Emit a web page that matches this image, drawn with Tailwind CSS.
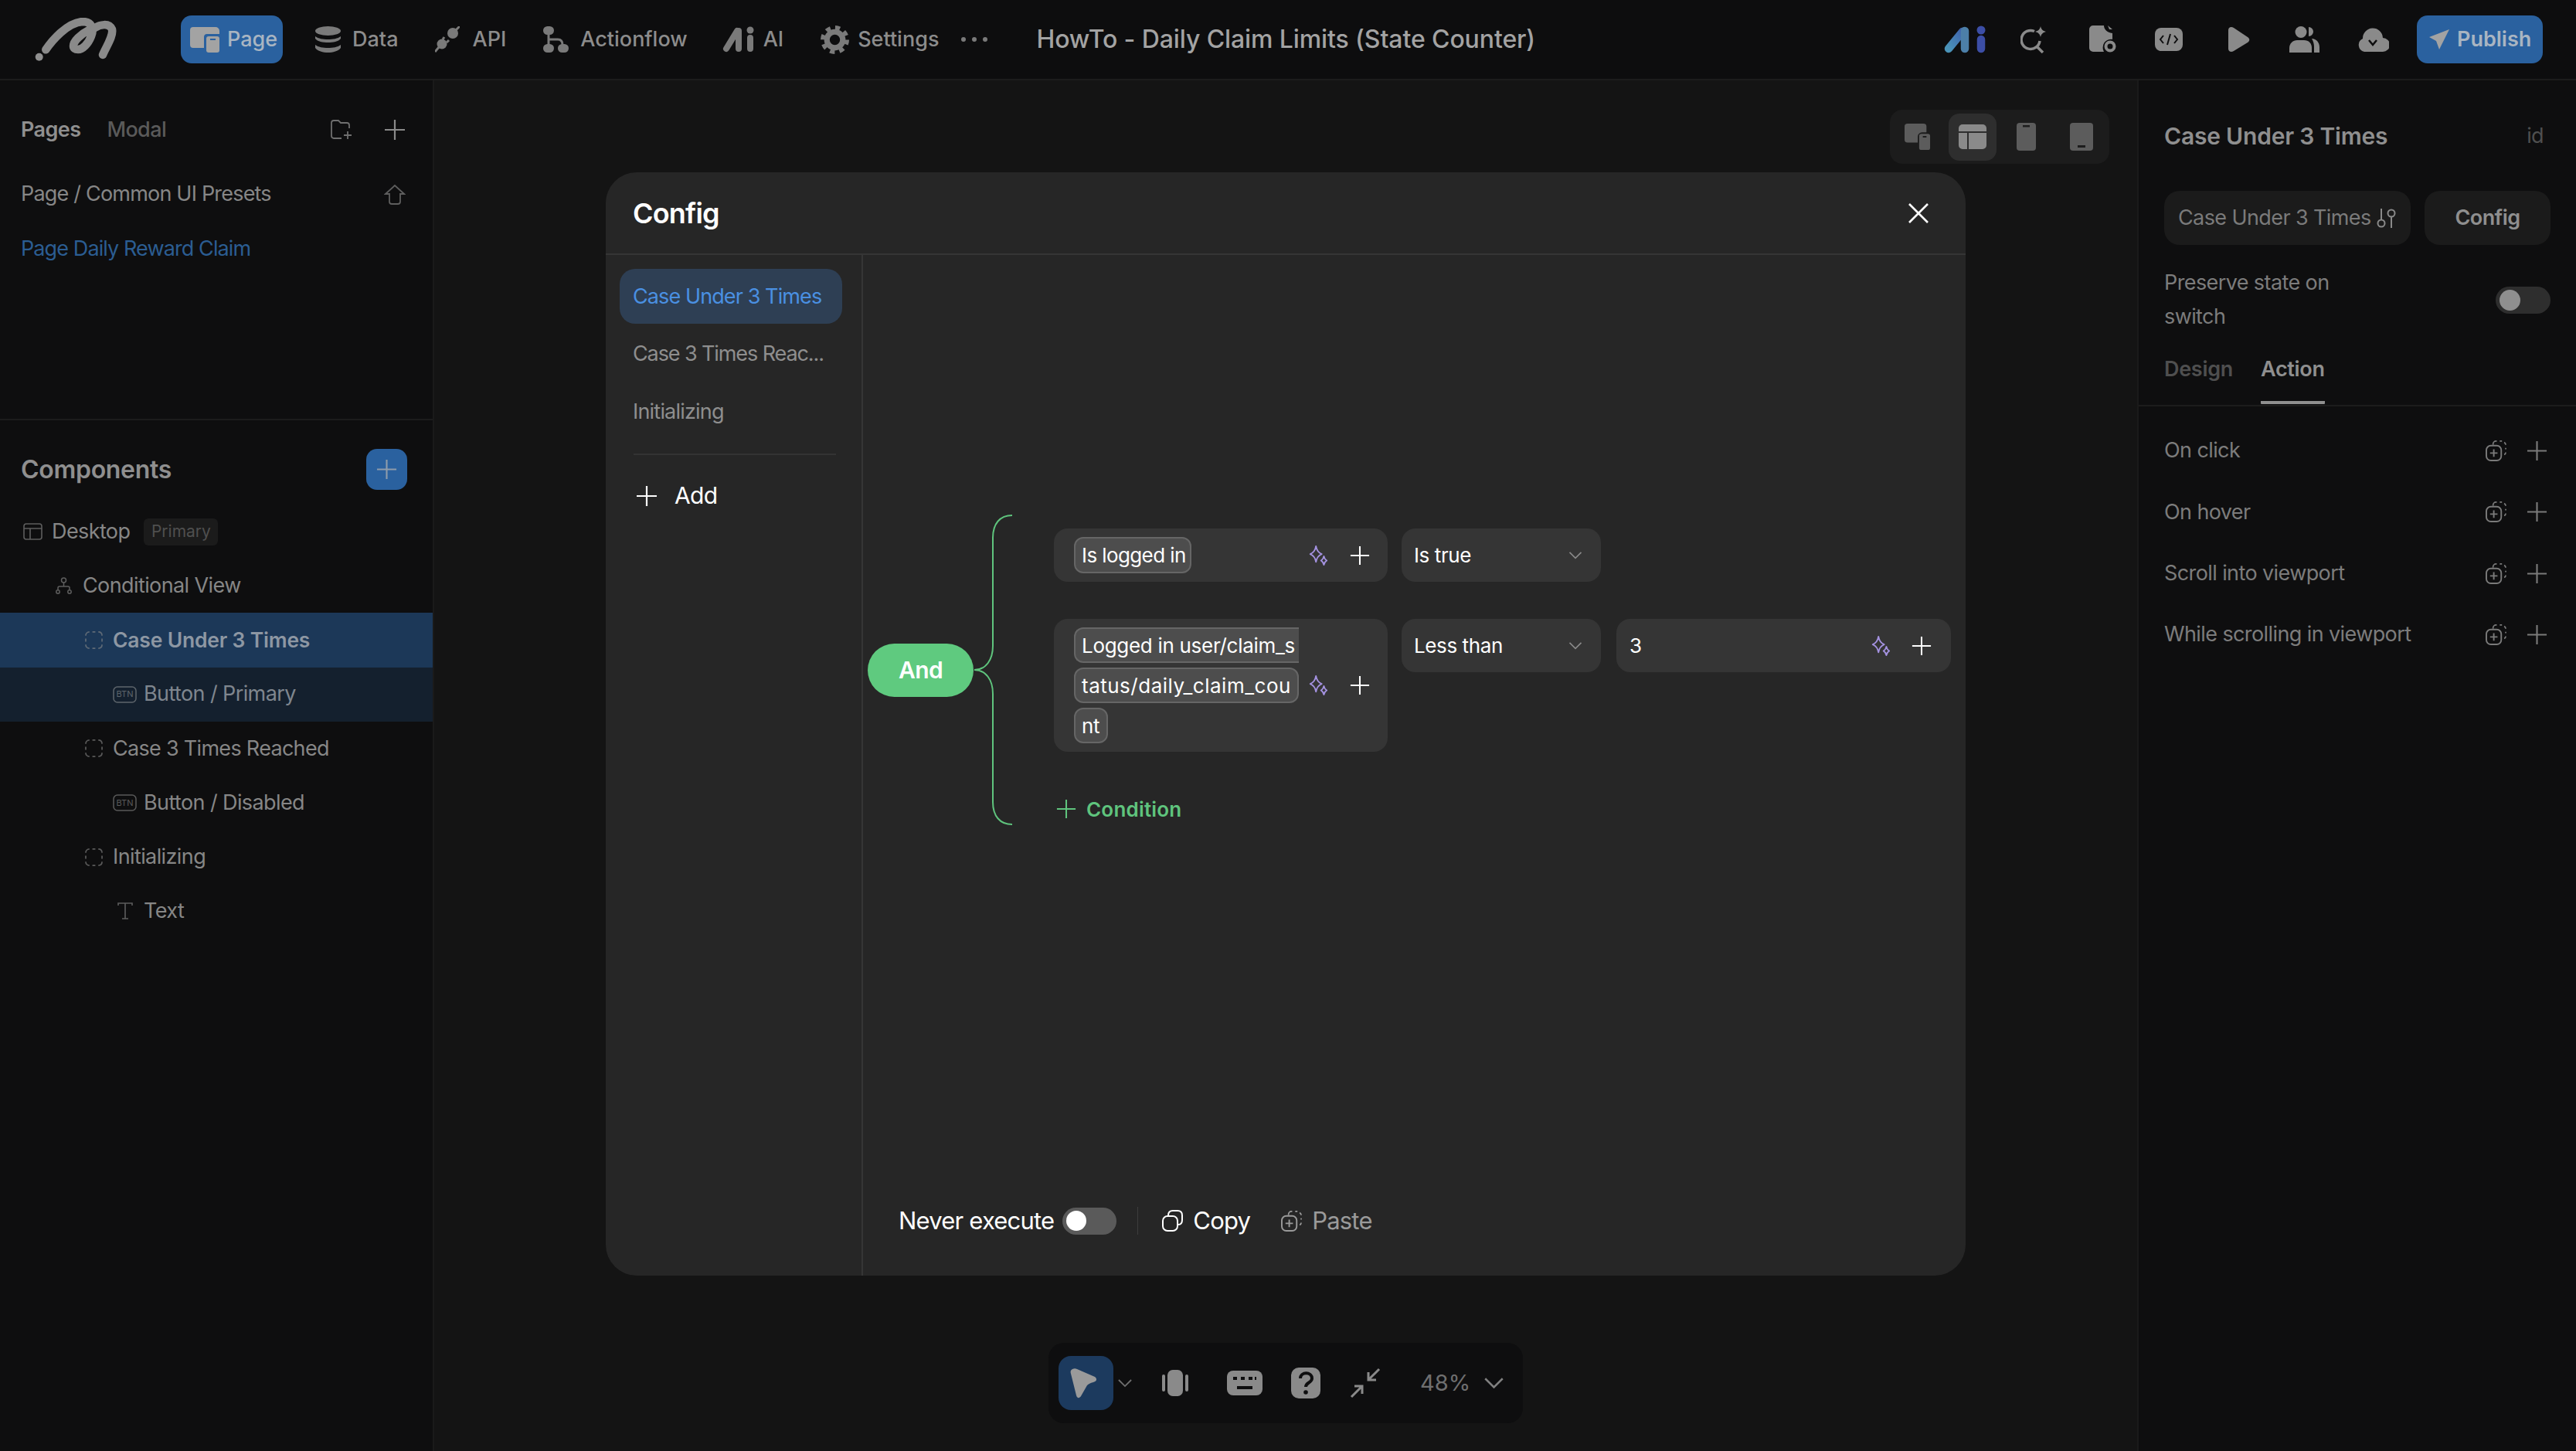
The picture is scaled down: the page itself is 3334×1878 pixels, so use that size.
<!doctype html>
<html lang="en">
  <head>
    <meta charset="UTF-8" />
    <title>HowTo - Daily Claim Limits (State Counter)</title>
    <script src="https://cdn.jsdelivr.net/npm/@tailwindcss/browser@4"></script>
  </head>
  <body class="h-[1878px] w-[3334px] overflow-hidden bg-[#141414] font-[Inter,sans-serif] text-[27px] tracking-[-0.6px] text-[#8c8c8c]">
    <!-- shared icons -->
    <svg class="hidden">
      <symbol id="plus" viewBox="0 0 28 28"><path d="M14 1v26M1 14h26" fill="none" stroke="currentColor" stroke-width="2.2" /></symbol>
      <symbol id="chev" viewBox="0 0 20 12"><path d="M1 1l9 9 9-9" fill="none" stroke="currentColor" stroke-width="2" /></symbol>
      <symbol id="spark" viewBox="0 0 30 28"><path d="M12 1c1 6 3 9 8 11-5 2-7 5-8 11-1-6-3-9-8-11 5-2 7-5 8-11zM23 15c.5 3 1.500 4.500 4 6-2.500 1.500-3.500 3-4 6-.5-3-1.500-4.500-4-6 2.500-1.500 3.500-3 4-6z" fill="none" stroke="currentColor" stroke-width="2" stroke-linejoin="round" /></symbol>
      <symbol id="paste" viewBox="0 0 28 28"><path d="M10 6V5a4 4 0 0 1 4-4h1M19 1h3M25 2.500c1.500 1 2 2 2 3.500M27 10v2M27 16c0 1.500-.5 2.500-2 3" fill="none" stroke="currentColor" stroke-width="1.800" /><rect x="1" y="7" width="20" height="20" rx="6" fill="none" stroke="currentColor" stroke-width="2" /><path d="M11 12v10M6 17h10" stroke="currentColor" stroke-width="2" /></symbol>
      <symbol id="dash" viewBox="0 0 24 24"><path d="M1 6c0-3 2-5 5-5M10 1h4M18 1c3 0 5 2 5 5M23 10v4M23 18c0 3-2 5-5 5M14 23h-4M6 23c-3 0-5-2-5-5M1 14v-4" fill="none" stroke="currentColor" stroke-width="1.800" /></symbol>
      <symbol id="btn" viewBox="0 0 31 22"><rect x="1" y="1" width="29" height="20" rx="5" fill="none" stroke="currentColor" stroke-width="1.500" /></symbol>
    </svg>

    <!-- top bar -->
    <header class="flex h-[104px] items-center border-b-2 border-[#1c1c1c] bg-[#0d0d0e] pr-[43px] pl-[45px]">
      <svg class="h-[56px] w-[106px]" viewBox="0 0 106 56" fill="none" stroke="#8a8a8a" stroke-linecap="round">
        <circle cx="5.700" cy="50.700" r="5" fill="#8f8f8f" stroke="none" />
        <path d="M14.300 41.300C22 30 42 6 62 5c12 0 15 9 11 19-4 10-11 17-17 17-8 0-8-7 0-15 6-6 10-8 14-10" stroke-width="10.500" />
        <path d="M78 13c6-4 18-7 22 2 2 9-8 23-12 33" stroke-width="10.500" />
      </svg>
      <nav class="ml-[83px] flex items-center gap-[48px] font-medium tracking-[0px]">
        <a class="mr-[-6px] flex h-[62px] w-[132px] items-center gap-[10px] rounded-[14px] bg-[#2a619f] pl-[12px] text-[#a9b5c2]">
          <svg class="h-[33px] w-[38px] shrink-0" viewBox="0 0 38 33"><path d="M4 0h29a5 5 0 0 1 5 5v4H22a4 4 0 0 0-4 4v14H4a4 4 0 0 1-4-4V4a4 4 0 0 1 4-4z" fill="#a3a3a3" /><rect x="21" y="12" width="17" height="21" rx="3" fill="#a3a3a3" /><rect x="26" y="15" width="7" height="2" fill="#2a619f" /></svg>
          <span>Page</span>
        </a>
        <a class="flex items-center gap-[15px]">
          <svg class="h-[34px] w-[33px]" viewBox="0 0 33 34" fill="#7a7a7a"><ellipse cx="16.500" cy="6" rx="16.500" ry="6" /><path d="M0 13c4 3 10 4 16.500 4S29 16 33 13v3c-3 4-10 5-16.500 5S3 20 0 16zM0 24c4 3 10 4 16.500 4S29 27 33 24v4c-3 4-10 6-16.500 6S3 32 0 28z" /></svg>
          <span>Data</span>
        </a>
        <a class="flex items-center gap-[16px]">
          <svg class="h-[34px] w-[32px]" viewBox="0 0 32 34" fill="#7a7a7a"><circle cx="23" cy="9" r="7" /><circle cx="9" cy="23" r="6.500" /><path d="M26 6l6-6M5 27l-5 6M12 14l-2 3M18 18l-3 3" fill="none" stroke="#7a7a7a" stroke-width="3" /></svg>
          <span>API</span>
        </a>
        <a class="flex items-center gap-[15px]">
          <svg class="h-[34px] w-[33px]" viewBox="0 0 33 34" fill="#7a7a7a"><rect width="14" height="11" rx="5.500" /><rect y="23" width="14" height="11" rx="5.500" /><rect x="19" y="23" width="14" height="11" rx="5.500" /><path d="M7 10v14M7 17h12c4 0 6 2 6 7" fill="none" stroke="#7a7a7a" stroke-width="3" /></svg>
          <span>Actionflow</span>
        </a>
        <a class="ml-[-3px] flex items-center gap-[11px]">
          <svg class="h-[34px] w-[42px]" viewBox="0 0 42 34" stroke="#7a7a7a" stroke-linecap="round" fill="none"><path d="M5 29L19 6M21 6v23M36 15v14" stroke-width="8" /><circle cx="36" cy="5" r="4.500" fill="#7a7a7a" stroke="none" /></svg>
          <span>AI</span>
        </a>
        <a class="flex items-center gap-[11px]">
          <svg class="h-[37px] w-[37px]" viewBox="0 0 36 36" fill="none" stroke="#7a7a7a"><circle cx="18" cy="18" r="10" stroke-width="7" /><circle cx="18" cy="18" r="15" stroke-width="6" stroke-dasharray="5.900 5.880" /></svg>
          <span>Settings</span>
        </a>
        <svg class="ml-[-19px] h-[6px] w-[34px]" viewBox="0 0 34 6" fill="#7a7a7a"><circle cx="3" cy="3" r="3" /><circle cx="17" cy="3" r="3" /><circle cx="31" cy="3" r="3" /></svg>
      </nav>
      <h1 class="ml-[63px] text-[32px] font-medium tracking-[-0.1px] text-[#a3a3a3]">HowTo - Daily Claim Limits (State Counter)</h1>
      <div class="ml-auto flex items-center">
        <svg class="h-[36px] w-[54px]" viewBox="0 0 54 36" fill="none" stroke-linecap="round">
          <defs><linearGradient id="aiblue" x1="0" y1="1" x2="1" y2="0"><stop offset="0" stop-color="#4a93b8" /><stop offset="1" stop-color="#3f63ad" /></linearGradient></defs>
          <path d="M6 30L24 8" stroke="url(#aiblue)" stroke-width="10.500" /><path d="M27 7v23" stroke="#4c7fa8" stroke-width="10.500" />
          <circle cx="48" cy="6" r="5.500" fill="#3c4ea6" /><path d="M48 18v12" stroke="#3c4ea6" stroke-width="10.500" />
        </svg>
        <svg class="ml-[45px] h-[36px] w-[33px]" viewBox="0 0 33 36" fill="none" stroke="#8a8a8a" stroke-width="3.500"><path d="M18 7.500A12 12 0 1 0 25 20M21 27l8 8" /><path d="M26 1c1 4 3 6 7 7-4 1-6 3-7 7-1-4-3-6-7-7 4-1 6-3 7-7z" fill="#8a8a8a" stroke="none" /></svg>
        <svg class="ml-[56px] h-[38px] w-[35px]" viewBox="0 0 35 38" fill="#8a8a8a"><path d="M5 1h14c0 5 4 9 11 10v8c-6-1-11 3-12 8-1 3 0 6 1 8H5a5 5 0 0 1-5-5V6a5 5 0 0 1 5-5z" /><path d="M24 1l6 5h-4z" /><circle cx="27" cy="28" r="5.500" fill="none" stroke="#8a8a8a" stroke-width="4" /></svg>
        <svg class="ml-[50px] h-[30px] w-[36px]" viewBox="0 0 36 30"><rect width="36" height="30" rx="8" fill="#8a8a8a" /><path d="M11 10l-4 5 4 5M25 10l4 5-4 5M20 8l-4 14" fill="none" stroke="#0d0d0e" stroke-width="2" /></svg>
        <svg class="ml-[59px] h-[32px] w-[28px]" viewBox="0 0 28 32"><path d="M0 4c0-4 4-5 7-3l18 12c3 2 3 5 0 7L7 31c-3 2-7 1-7-3z" fill="#8a8a8a" /></svg>
        <svg class="ml-[51px] h-[34px] w-[39px]" viewBox="0 0 39 34" fill="#8a8a8a"><circle cx="15" cy="7.500" r="7.500" /><path d="M0 34v-6c0-6 5-10 10-10h9c6 0 10 4 10 10v6z" /><path d="M25 1a6 6 0 0 1 0 12zM29 16c6 0 10 5 10 11v7h-7v-7c0-4-1-8-3-11z" /></svg>
        <svg class="ml-[49px] h-[32px] w-[41px]" viewBox="0 0 41 32"><path d="M9 32a9 9 0 0 1-2-17 13 13 0 0 1 26-1 9 9 0 0 1 0 18z" fill="#8a8a8a" /><path d="M15 17l5 6 5-6" fill="none" stroke="#0d0d0e" stroke-width="2.500" /></svg>
        <a class="ml-[36px] flex h-[62px] w-[163px] items-center gap-[10px] rounded-[14px] bg-[#2a619f] pl-[16px] font-semibold tracking-[0px] text-[#a9b5c2]">
          <svg class="h-[26px] w-[26px] shrink-0" viewBox="0 0 26 26"><path d="M26 0L0 10l9 5 4 11z" fill="#a3a3a3" /></svg>
          <span>Publish</span>
        </a>
      </div>
    </header>

    <div class="flex h-[1774px]">
      <!-- left panel -->
      <aside class="flex w-[562px] shrink-0 flex-col border-r-2 border-[#1a1a1a] bg-[#0e0e0f]">
        <section class="h-[440px] border-b-2 border-[#1c1c1c]">
          <div class="mt-[36px] flex h-[56px] items-center pr-[35px] pl-[27px]">
            <span class="font-semibold text-[#8f8f8f]">Pages</span>
            <span class="ml-[34px] font-medium text-[#5a5a5a]">Modal</span>
            <svg class="mr-[41px] ml-auto h-[26px] w-[28px]" viewBox="0 0 28 26" fill="none" stroke="#6f6f6f" stroke-width="1.800"><path d="M14 24H4a3 3 0 0 1-3-3V4a3 3 0 0 1 3-3h6l3 3h8a3 3 0 0 1 3 3v4" /><path d="M22 15v10M17 20h10" /></svg>
            <svg class="h-[28px] w-[28px] text-[#8a8a8a]"><use href="#plus" /></svg>
          </div>
          <div class="mt-[20px] flex h-[71px] items-center justify-between pr-[35px] pl-[27px] tracking-[-0.8px] text-[#868686]">
            <span>Page / Common UI Presets</span>
            <svg class="h-[26px] w-[28px]" viewBox="0 0 28 26" fill="none" stroke="#5e5e5e" stroke-width="1.800"><path d="M14 1L2 12h5v10a3 3 0 0 0 3 3h8a3 3 0 0 0 3-3V12h5z" /></svg>
          </div>
          <div class="flex h-[71px] items-center pl-[27px] tracking-[-0.9px] text-[#2b5d92]">Page Daily Reward Claim</div>
        </section>
        <section>
          <div class="mt-[37px] flex h-[53px] items-center justify-between pr-[33px] pl-[27px]">
            <h2 class="text-[32px] font-semibold tracking-[-0.3px] text-[#8f8f8f]">Components</h2>
            <button class="flex h-[53px] w-[53px] items-center justify-center rounded-[14px] bg-[#2a619f] text-[#8e9cab]"><svg class="h-[27px] w-[27px]"><use href="#plus" /></svg></button>
          </div>
          <ul class="mt-[19px]">
            <li class="flex h-[70.2px] items-center pl-[30px]">
              <svg class="mr-[12px] h-[22px] w-[25px]" viewBox="0 0 25 22" fill="none" stroke="#5e5e5e" stroke-width="1.600"><rect x="1" y="1" width="23" height="20" rx="3" /><path d="M1 7h23M9 7v14" /></svg>
              <span class="text-[#868686]">Desktop</span>
              <span class="ml-[18px] flex h-[35px] w-[96px] items-center justify-center rounded-[6px] bg-[#1b1b1b] text-[21px] tracking-[0px] text-[#4f4f4f]">Primary</span>
            </li>
            <li class="flex h-[70.2px] items-center pl-[72px] text-[#868686]">
              <svg class="mr-[14px] h-[22px] w-[21px]" viewBox="0 0 21 22" fill="none" stroke="#5e5e5e" stroke-width="1.500"><circle cx="10.500" cy="4" r="3" /><circle cx="3" cy="19" r="2.200" /><circle cx="18" cy="19" r="2.200" /><path d="M10.500 7v5M3 17v-3a2 2 0 0 1 2-2h11a2 2 0 0 1 2 2v3" /></svg>
              <span>Conditional View</span>
            </li>
            <li class="flex h-[70.2px] items-center bg-[#1c3858] pl-[110px] font-semibold text-[#8d97a3]">
              <svg class="mr-[13px] h-[23px] w-[23px] text-[#5f6a76]"><use href="#dash" /></svg>
              <span class="text-[26.500px] tracking-[-0.2px]">Case Under 3 Times</span>
            </li>
            <li class="flex h-[70.2px] items-center bg-[#14202e] pl-[146px] text-[#7f868e]">
              <span class="relative mr-[9px] flex h-[22px] w-[31px] items-center justify-center text-[#5e656c]"><svg class="absolute inset-0 h-[22px] w-[31px]"><use href="#btn" /></svg><span class="text-[11px] tracking-[0px]">BTN</span></span>
              <span>Button / Primary</span>
            </li>
            <li class="flex h-[70.2px] items-center pl-[110px] tracking-[-0.7px] text-[#868686]">
              <svg class="mr-[13px] h-[23px] w-[23px] text-[#5a5a5a]"><use href="#dash" /></svg>
              <span>Case 3 Times Reached</span>
            </li>
            <li class="flex h-[70.2px] items-center pl-[146px] text-[#868686]">
              <span class="relative mr-[9px] flex h-[22px] w-[31px] items-center justify-center text-[#5a5a5a]"><svg class="absolute inset-0 h-[22px] w-[31px]"><use href="#btn" /></svg><span class="text-[11px] tracking-[0px]">BTN</span></span>
              <span>Button / Disabled</span>
            </li>
            <li class="flex h-[70.2px] items-center pl-[110px] text-[#868686]">
              <svg class="mr-[13px] h-[23px] w-[23px] text-[#5a5a5a]"><use href="#dash" /></svg>
              <span>Initializing</span>
            </li>
            <li class="flex h-[70.2px] items-center pl-[152px] text-[#868686]">
              <svg class="mr-[14px] h-[22px] w-[20px]" viewBox="0 0 20 22" fill="none" stroke="#5e5e5e" stroke-width="1.600"><path d="M1 4V1h18v3M10 1v20M6 21h8" /></svg>
              <span>Text</span>
            </li>
          </ul>
        </section>
      </aside>

      <!-- canvas -->
      <main class="relative flex-1">
        <div class="absolute top-[38px] right-[36px] flex h-[70px] w-[284px] items-center rounded-[16px] bg-[#1c1c1c] pl-[19px]">
          <svg class="h-[36px] w-[34px]" viewBox="0 0 36 36" fill="#5c5c5c"><path d="M4 0h22a4 4 0 0 1 4 4v8h-6a6 6 0 0 0-6 6v8H4a4 4 0 0 1-4-4V4a4 4 0 0 1 4-4z" /><rect x="20" y="14" width="15" height="22" rx="3" /><rect x="25" y="17" width="5" height="2" fill="#1c1c1c" /></svg>
          <div class="ml-[23px] flex h-[61px] w-[62px] items-center justify-center rounded-[14px] bg-[#2e2e2e]">
            <svg class="h-[32px] w-[36px]" viewBox="0 0 36 32" fill="#8a8a8a"><path d="M5 0h26a5 5 0 0 1 5 5v4H0V5a5 5 0 0 1 5-5z" /><path d="M0 11h11v21H5a5 5 0 0 1-5-5zM13 11h23v16a5 5 0 0 1-5 5H13z" /></svg>
          </div>
          <svg class="ml-[26px] h-[36px] w-[25px]" viewBox="0 0 25 36" fill="#5c5c5c"><path d="M4 0h17a4 4 0 0 1 4 4v28a4 4 0 0 1-4 4H4a4 4 0 0 1-4-4V4a4 4 0 0 1 4-4z" /><rect x="8" y="3" width="9" height="2.500" fill="#1c1c1c" /></svg>
          <svg class="ml-[44px] h-[36px] w-[30px]" viewBox="0 0 30 36" fill="#5c5c5c"><path d="M4 0h22a4 4 0 0 1 4 4v28a4 4 0 0 1-4 4H4a4 4 0 0 1-4-4V4a4 4 0 0 1 4-4z" /><rect x="10" y="29" width="10" height="3" fill="#1c1c1c" /></svg>
        </div>

        <div class="absolute bottom-[36px] left-1/2 flex h-[104px] w-[614px] -translate-x-1/2 items-center rounded-[20px] bg-[#0e0e0f] pl-[13px] text-[#8a8a8a]">
          <div class="flex h-[70px] w-[71px] items-center justify-center rounded-[16px] bg-[#1c3a5e]">
            <svg class="h-[40px] w-[42px]" viewBox="0 0 42 40"><path d="M3 2c-2 1-3 3-2 6l7 28c1 4 4 4 6 1l8-14c2-2 4-3 8-4 5-1 5-5 2-7L9 2C7 1 5 1 3 2z" fill="#9a9a9a" /></svg>
          </div>
          <svg class="ml-[6px] h-[11px] w-[18px] text-[#6f6f6f]"><use href="#chev" /></svg>
          <svg class="ml-[38px] h-[34px] w-[36px]" viewBox="0 0 36 34"><rect x="8" width="20" height="34" rx="7" fill="#8a8a8a" /><path d="M3 8v18M33 8v18" stroke="#8a8a8a" stroke-width="4" stroke-linecap="round" /></svg>
          <svg class="ml-[49px] h-[32px] w-[46px]" viewBox="0 0 46 32"><rect width="46" height="32" rx="8" fill="#8a8a8a" /><path d="M8 10h5M18 10h5M28 10h5M36 10h2M13 22h20" stroke="#0e0e0f" stroke-width="4" /></svg>
          <svg class="ml-[37px] h-[40px] w-[38px]" viewBox="0 0 38 40"><rect width="38" height="40" rx="10" fill="#8a8a8a" /><path d="M12 14c0-9 15-9 15 0 0 6-8 5-8 11" fill="none" stroke="#0e0e0f" stroke-width="4" /><circle cx="19" cy="32" r="2.800" fill="#0e0e0f" /></svg>
          <svg class="ml-[38px] h-[40px] w-[40px]" viewBox="0 0 40 40" fill="none" stroke="#8a8a8a" stroke-width="3"><path d="M38 2L24 16M24 6v10h10M2 38l14-14M6 24h10v10" /></svg>
          <span class="ml-[51px] text-[29px] tracking-[0px] text-[#6f6f6f]">48%</span>
          <svg class="ml-[18px] h-[15px] w-[25px] text-[#808080]"><use href="#chev" /></svg>
        </div>

        <!-- config modal -->
        <div class="absolute top-[119px] left-[222px] flex h-[1428px] w-[1760px] flex-col rounded-[40px] bg-[#262626] text-white">
          <div class="flex h-[107px] shrink-0 items-center justify-between border-b-2 border-[#353535] pr-[47px] pl-[35px]">
            <h2 class="text-[36px] font-semibold tracking-[-0.8px]">Config</h2>
            <svg class="h-[28px] w-[28px]" viewBox="0 0 28 28"><path d="M2 2l24 24M26 2L2 26" stroke="#fff" stroke-width="2.600" /></svg>
          </div>
          <div class="flex flex-1">
            <div class="w-[333px] shrink-0 border-r-2 border-[#353535] pt-[18px] pl-[18px]">
              <div class="flex h-[71px] w-[288px] items-center rounded-[20px] bg-[#2e3f54] pt-[2px] pl-[17px] tracking-[-0.9px] text-[#4a90e2]">Case Under 3 Times</div>
              <div class="mt-[4px] flex h-[71px] w-[288px] items-center pl-[17px] tracking-[-1.1px] text-[#8e8e8e]">Case 3 Times Reac...</div>
              <div class="mt-[4px] flex h-[71px] w-[288px] items-center pl-[17px] tracking-[-0.8px] text-[#8e8e8e]">Initializing</div>
              <div class="mt-[18px] ml-[18px] h-[2px] w-[262px] bg-[#333333]"></div>
              <div class="mt-[17px] flex h-[71px] items-center pl-[21px] text-[30px]">
                <svg class="h-[28px] w-[28px]"><use href="#plus" /></svg>
                <span class="ml-[22px]">Add</span>
              </div>
            </div>
            <div class="flex flex-1 flex-col">
              <div class="relative mt-[336px] ml-[6px] flex h-[402px] items-center">
                <div class="flex h-[69px] w-[137px] items-center justify-center rounded-full bg-[#5fca7f] text-[30px] font-semibold">And</div>
                <svg class="absolute top-0 left-[137px] h-[402px] w-[52px]" viewBox="0 0 52 402" fill="none" stroke="#5fc47d" stroke-width="2"><path d="M50 1C34 1 25 12 25 30V170C25 188 16 201 1 201C16 201 25 214 25 232V372C25 390 34 401 50 401" /></svg>
                <div class="ml-[104px] flex h-full flex-col pt-[18px] text-[26px] tracking-[-0.4px]">
                  <div class="flex items-start gap-[18px]">
                    <div class="flex h-[69px] w-[432px] items-center rounded-[18px] bg-[#353535] pl-[26px]">
                      <span class="flex h-[47px] w-[152px] items-center rounded-[12px] border-2 border-[#666666] bg-[#4d4d4d] pl-[8px] tracking-[-0.6px]">Is logged in</span>
                      <svg class="ml-[150px] h-[26px] w-[28px] text-[#a492e0]"><use href="#spark" /></svg>
                      <svg class="ml-[27px] h-[26px] w-[26px]"><use href="#plus" /></svg>
                    </div>
                    <div class="flex h-[69px] w-[258px] items-center justify-between rounded-[18px] bg-[#353535] pr-[24px] pl-[16px]">
                      <span>Is true</span>
                      <svg class="h-[10px] w-[18px] text-[#8a8a8a]"><use href="#chev" /></svg>
                    </div>
                  </div>
                  <div class="mt-[48px] flex items-start gap-[18px]">
                    <div class="relative h-[172px] w-[432px] rounded-[18px] bg-[#353535] pt-[11px] pl-[26px]">
                      <span class="flex h-[46px] w-[291px] items-center overflow-hidden rounded-l-[12px] border-y-2 border-l-2 border-[#666666] bg-[#4d4d4d] pl-[8px] tracking-[-0.3px] whitespace-nowrap">Logged in user/claim_s</span>
                      <span class="mt-[6px] flex h-[46px] w-[291px] items-center overflow-hidden rounded-[12px] border-2 border-[#666666] bg-[#4d4d4d] pl-[8px] tracking-[0.5px] whitespace-nowrap">tatus/daily_claim_cou</span>
                      <span class="mt-[6px] flex h-[46px] w-[44px] items-center rounded-[12px] border-2 border-[#666666] bg-[#4d4d4d] pl-[8px]">nt</span>
                      <svg class="absolute top-[73px] left-[328px] h-[26px] w-[28px] text-[#a492e0]"><use href="#spark" /></svg>
                      <svg class="absolute top-[73px] left-[383px] h-[26px] w-[26px]"><use href="#plus" /></svg>
                    </div>
                    <div class="flex h-[69px] w-[258px] items-center justify-between rounded-[18px] bg-[#353535] pr-[24px] pl-[16px]">
                      <span>Less than</span>
                      <svg class="h-[10px] w-[18px] text-[#8a8a8a]"><use href="#chev" /></svg>
                    </div>
                    <div class="ml-[2px] flex h-[69px] w-[433px] items-center rounded-[18px] bg-[#353535] pr-[25px] pl-[17px]">
                      <span>3</span>
                      <svg class="mr-[26px] ml-auto h-[26px] w-[28px] text-[#a492e0]"><use href="#spark" /></svg>
                      <svg class="h-[26px] w-[26px]"><use href="#plus" /></svg>
                    </div>
                  </div>
                  <div class="mt-[59px] flex h-[30px] items-center text-[26px] font-semibold tracking-[0.2px] text-[#5fc47d]">
                    <svg class="ml-[3px] h-[26px] w-[26px]"><use href="#plus" /></svg>
                    <span class="ml-[13px]">Condition</span>
                  </div>
                </div>
              </div>
              <div class="mt-auto mb-[53px] ml-[46px] flex h-[36px] items-center text-[31px] tracking-[-0.8px]">
                <span>Never execute</span>
                <span class="ml-[11px] flex h-[35px] w-[70px] items-center rounded-full bg-[#5a5a5a] pl-[5px]"><span class="h-[26px] w-[26px] rounded-full bg-white"></span></span>
                <span class="ml-[27px] h-[36px] w-[1px] bg-[#3d3d3d]"></span>
                <svg class="ml-[31px] h-[28px] w-[27px]" viewBox="0 0 27 28" fill="none" stroke="#fff" stroke-width="2"><rect x="1" y="8" width="19" height="19" rx="6" /><path d="M8 7c0-4 2-6 6-6h6c4 0 6 2 6 6v6c0 4-2 6-5 6" /></svg>
                <span class="ml-[13px]">Copy</span>
                <svg class="ml-[40px] h-[27px] w-[27px] text-[#9a9a9a]"><use href="#paste" /></svg>
                <span class="ml-[13px] text-[#9a9a9a]">Paste</span>
              </div>
            </div>
          </div>
        </div>
      </main>

      <!-- right panel -->
      <aside class="w-[568px] shrink-0 border-l-2 border-[#1a1a1a] bg-[#0e0e0f]">
        <div class="mt-[52px] flex h-[40px] items-center justify-between pr-[42px] pl-[33px]">
          <h2 class="text-[30px] font-semibold tracking-[-0.2px] text-[#8f8f8f]">Case Under 3 Times</h2>
          <span class="text-[#4f4f4f]">id</span>
        </div>
        <div class="mt-[51px] flex gap-[18px] pl-[33px]">
          <div class="flex h-[70px] w-[319px] items-center gap-[6px] rounded-[20px] bg-[#1b1b1b] pl-[18px] text-[#7a7a7a]">
            <span>Case Under 3 Times</span>
            <svg class="h-[27px] w-[27px]" viewBox="0 0 27 27" fill="none" stroke="#8a8a8a" stroke-width="2"><path d="M7 1v14M20 12v14" /><circle cx="7" cy="20" r="4.500" /><circle cx="20" cy="7" r="4.500" /></svg>
          </div>
          <div class="flex h-[70px] w-[163px] items-center justify-center rounded-[20px] bg-[#1b1b1b] font-semibold text-[#8f8f8f]">Config</div>
        </div>
        <div class="mt-[27px] flex items-center justify-between pr-[33px] pl-[33px]">
          <p class="w-[260px] leading-[44px] text-[#7c7c7c]">Preserve state on switch</p>
          <span class="flex h-[35px] w-[71px] items-center rounded-full bg-[#2e2e2e] pl-[5px]"><span class="h-[27px] w-[27px] rounded-full bg-[#8f8f8f]"></span></span>
        </div>
        <div class="mt-[26px] flex h-[68px] gap-[36px] border-b-2 border-[#1c1c1c] pl-[33px] font-semibold tracking-[-0.3px]">
          <span class="leading-[40px] text-[#4f4f4f]">Design</span>
          <span class="h-[65px] rounded-[1px] border-b-4 border-[#8f8f8f] leading-[40px] text-[#8f8f8f]">Action</span>
        </div>
        <ul class="mt-[18px] text-[#7c7c7c]">
          <li class="flex h-[79.300px] items-center pr-[37px] pl-[33px]">
            <span>On click</span>
            <svg class="mr-[26px] ml-auto h-[27px] w-[27px] text-[#7a7a7a]"><use href="#paste" /></svg>
            <svg class="h-[27px] w-[27px] text-[#7a7a7a]"><use href="#plus" /></svg>
          </li>
          <li class="flex h-[79.300px] items-center pr-[37px] pl-[33px]">
            <span>On hover</span>
            <svg class="mr-[26px] ml-auto h-[27px] w-[27px] text-[#7a7a7a]"><use href="#paste" /></svg>
            <svg class="h-[27px] w-[27px] text-[#7a7a7a]"><use href="#plus" /></svg>
          </li>
          <li class="flex h-[79.300px] items-center pr-[37px] pl-[33px]">
            <span>Scroll into viewport</span>
            <svg class="mr-[26px] ml-auto h-[27px] w-[27px] text-[#7a7a7a]"><use href="#paste" /></svg>
            <svg class="h-[27px] w-[27px] text-[#7a7a7a]"><use href="#plus" /></svg>
          </li>
          <li class="flex h-[79.300px] items-center pr-[37px] pl-[33px]">
            <span>While scrolling in viewport</span>
            <svg class="mr-[26px] ml-auto h-[27px] w-[27px] text-[#7a7a7a]"><use href="#paste" /></svg>
            <svg class="h-[27px] w-[27px] text-[#7a7a7a]"><use href="#plus" /></svg>
          </li>
        </ul>
      </aside>
    </div>
  </body>
</html>
